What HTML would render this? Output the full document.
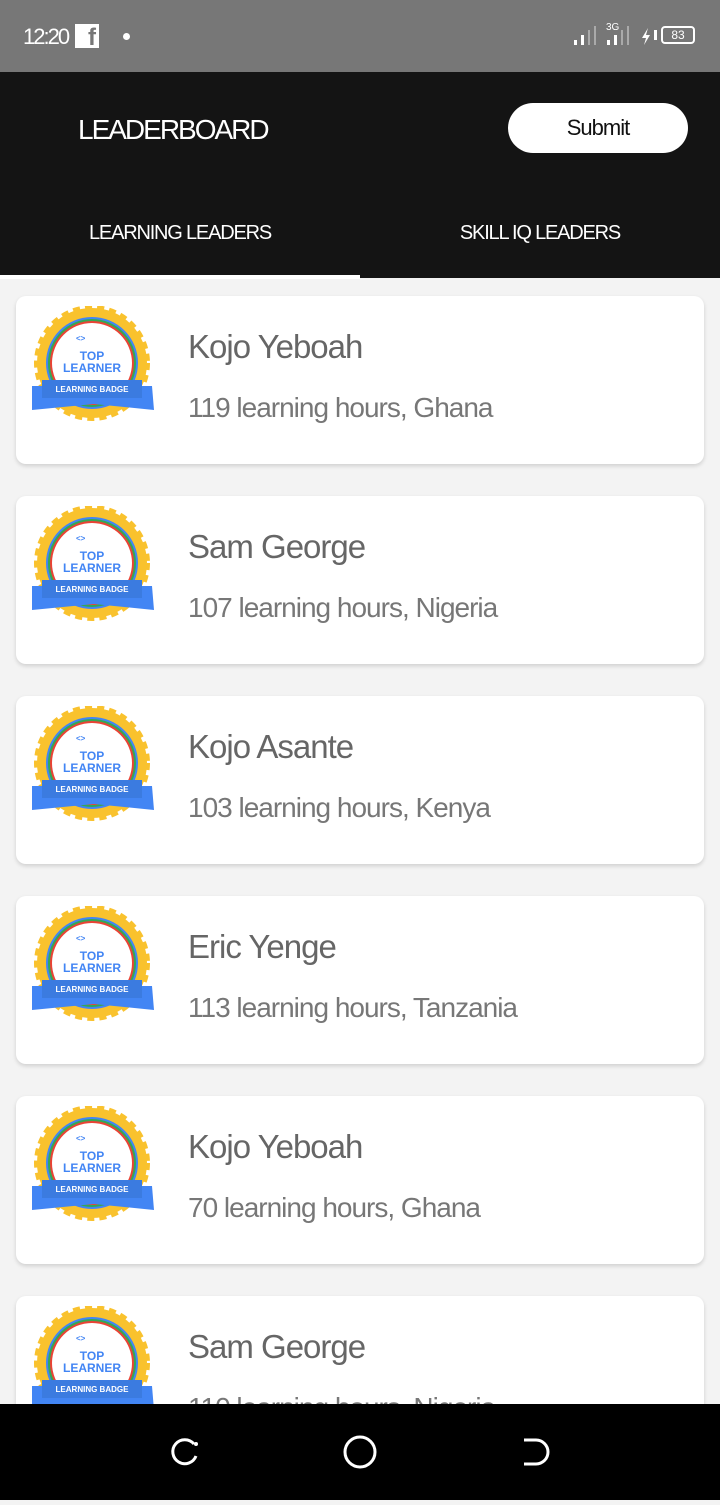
<!DOCTYPE html>
<html><head><meta charset="utf-8"><style>
*{margin:0;padding:0;box-sizing:border-box}
body{width:720px;height:1500px;overflow:hidden;background:#f3f3f3;font-family:"Liberation Sans",sans-serif;position:relative}
.sb{position:absolute;top:0;left:0;width:720px;height:72px;background:#777;color:#fff}
.hd{position:absolute;top:72px;left:0;width:720px;height:206px;background:#141414;color:#fff}
.title{position:absolute;left:78px;top:42px;font-size:28px;letter-spacing:-2px}
.btn{position:absolute;left:508px;top:31px;width:180px;height:50px;background:#fff;border-radius:25px;color:#111;font-size:22px;text-align:center;line-height:50px;letter-spacing:-1px}
.tab{position:absolute;top:150px;font-size:20px;letter-spacing:-1.2px;width:360px;text-align:center}
.ind{position:absolute;left:0;top:203px;width:360px;height:4px;background:#fff}
.card{position:absolute;left:16px;width:688px;height:168px;background:#fff;border-radius:10px;box-shadow:0 2px 4px rgba(0,0,0,.15)}
.card svg{position:absolute;left:14px;top:10px}
.nm{position:absolute;left:172px;top:32px;font-size:33px;color:#666;letter-spacing:-1px}
.sub{position:absolute;left:172px;top:96px;font-size:28px;color:#777;letter-spacing:-1px}
.nav{position:absolute;top:1404px;left:0;width:720px;height:96px;background:#000}
</style></head><body>
<div class="sb">
<div style="position:absolute;left:23px;top:24px;font-size:22px;letter-spacing:-2px">12:20</div>
<div style="position:absolute;left:75px;top:24px;width:24px;height:24px;background:#fff;color:#777;font-weight:bold;font-size:24px;text-align:right;line-height:28px;padding-right:3px">f</div>
<div style="position:absolute;left:123px;top:33px;width:7px;height:7px;border-radius:50%;background:#fff"></div>
<svg style="position:absolute;left:572px;top:18px" width="90" height="30">
<rect x="2" y="22" width="3" height="5" fill="#fff"/><rect x="9" y="17" width="3" height="10" fill="#fff"/><rect x="16" y="12" width="2" height="15" fill="#aaa"/><rect x="22" y="8" width="2" height="19" fill="#aaa"/>
<text x="34" y="12" font-size="10" fill="#fff" font-family="Liberation Sans">3G</text>
<rect x="35" y="22" width="3" height="5" fill="#fff"/><rect x="42" y="17" width="3" height="10" fill="#fff"/><rect x="49" y="12" width="2" height="15" fill="#aaa"/><rect x="55" y="8" width="2" height="19" fill="#aaa"/>
<path d="M76 10 L70 20 L74 20 L72 27 L78 17 L74 17 Z" fill="#fff"/><rect x="82" y="12" width="3" height="10" fill="#fff"/>
</svg>
<div style="position:absolute;left:661px;top:26px;width:34px;height:18px;border:2px solid #fff;border-radius:4px;font-size:12px;text-align:center;line-height:14px">83</div>
</div>
<div class="hd">
<div class="title">LEADERBOARD</div>
<div class="btn">Submit</div>
<div class="tab" style="left:0">LEARNING LEADERS</div>
<div class="tab" style="left:360px">SKILL IQ LEADERS</div>
<div class="ind"></div>
</div>
<svg width="0" height="0" style="position:absolute"><defs>
<g id="b">
<circle cx="62" cy="57" r="55" fill="#f9c22e" stroke="#f9c22e" stroke-width="6" stroke-dasharray="7 5"/>
<circle cx="62" cy="57" r="51" fill="#f9c22e"/>
<circle cx="62" cy="57" r="46" fill="#4285f4"/>
<circle cx="62" cy="57" r="44" fill="#34a853"/>
<circle cx="62" cy="57" r="42" fill="#ea4335"/>
<circle cx="62" cy="57" r="40" fill="#fff"/>
<path d="M2 80 L122 80 L124 104 L64 98 L2 104 Z" fill="#4285f4"/>
<rect x="12" y="74" width="100" height="18" fill="#3b7be0"/>
<text x="62" y="86" font-size="8" font-weight="bold" fill="#fff" text-anchor="middle" font-family="Liberation Sans">LEARNING BADGE</text>
<text x="62" y="54" font-size="12" font-weight="bold" fill="#4285f4" text-anchor="middle" font-family="Liberation Sans">TOP</text>
<text x="62" y="66" font-size="12" font-weight="bold" fill="#4285f4" text-anchor="middle" font-family="Liberation Sans">LEARNER</text>
<text x="46" y="35" font-size="8" font-weight="bold" fill="#4285f4" font-family="Liberation Sans">&lt;&gt;</text>
</g></defs></svg>
<div class="card" style="top:296px"><svg width="126" height="120"><use href="#b"/></svg><div class="nm">Kojo Yeboah</div><div class="sub">119 learning hours, Ghana</div></div>
<div class="card" style="top:496px"><svg width="126" height="120"><use href="#b"/></svg><div class="nm">Sam George</div><div class="sub">107 learning hours, Nigeria</div></div>
<div class="card" style="top:696px"><svg width="126" height="120"><use href="#b"/></svg><div class="nm">Kojo Asante</div><div class="sub">103 learning hours, Kenya</div></div>
<div class="card" style="top:896px"><svg width="126" height="120"><use href="#b"/></svg><div class="nm">Eric Yenge</div><div class="sub">113 learning hours, Tanzania</div></div>
<div class="card" style="top:1096px"><svg width="126" height="120"><use href="#b"/></svg><div class="nm">Kojo Yeboah</div><div class="sub">70 learning hours, Ghana</div></div>
<div class="card" style="top:1296px"><svg width="126" height="120"><use href="#b"/></svg><div class="nm">Sam George</div><div class="sub">110 learning hours, Nigeria</div></div>
<div class="nav">
<svg width="720" height="96">
<path d="M194 40 A12 12 0 1 0 196 52" fill="none" stroke="#fff" stroke-width="3"/>
<circle cx="196" cy="40" r="2" fill="#fff"/>
<circle cx="360" cy="48" r="15" fill="none" stroke="#fff" stroke-width="3"/>
<path d="M524 36 L536 36 A12 12 0 0 1 536 60 L524 60" fill="none" stroke="#fff" stroke-width="3"/>
</svg>
</div>
</body></html>
